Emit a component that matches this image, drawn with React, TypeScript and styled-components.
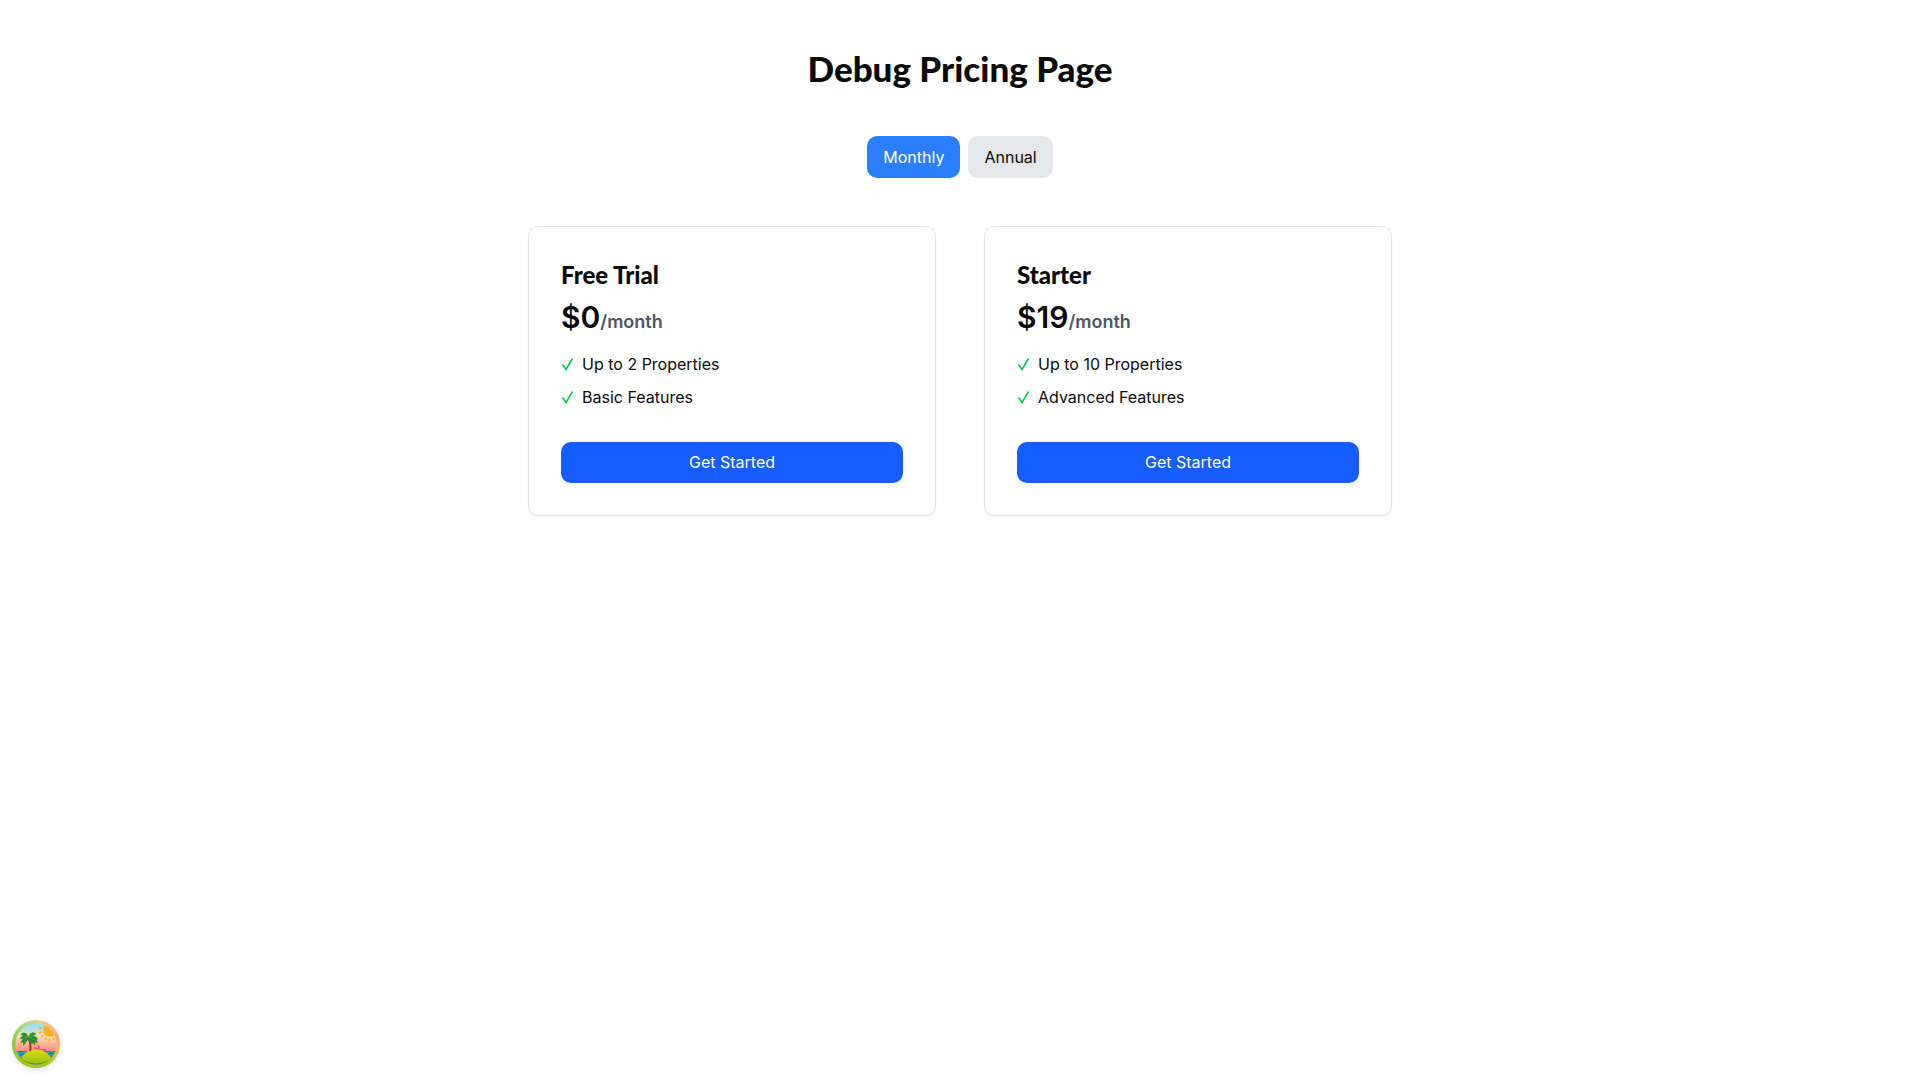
import React, { useState } from "react";
import styled, { createGlobalStyle } from "styled-components";

const GlobalStyle = createGlobalStyle`
  *, *::before, *::after { box-sizing: border-box; }
  body {
    margin: 0;
    background: #ffffff;
    color: #0a0a0a;
    font-family: Inter, "Open Sans", sans-serif;
    font-size: 16px;
    line-height: 26px;
    -webkit-font-smoothing: antialiased;
  }
  button { font: inherit; color: inherit; border: 0; cursor: pointer; }
`;

const Page = styled.main`
  padding: 48px 16px;
  max-width: 896px;
  margin: 0 auto;
`;

const Title = styled.h1`
  margin: 0 0 48px;
  text-align: center;
  font-family: Lato, sans-serif;
  font-size: 35px;
  line-height: 40px;
  font-weight: 900;
`;

const Toggle = styled.div`
  display: flex;
  justify-content: center;
  gap: 8px;
  margin-bottom: 48px;
`;

const ToggleButton = styled.button<{ $active: boolean }>`
  padding: 8px 16px;
  border-radius: 10px;
  background: ${(p) => (p.$active ? "#2b7fff" : "#e5e7eb")};
  && { color: ${(p) => (p.$active ? "#ffffff" : "#0a0a0a")}; }
`;

const Plans = styled.div`
  display: grid;
  grid-template-columns: repeat(auto-fit, minmax(280px, 1fr));
  gap: 48px;
`;

const Card = styled.section`
  padding: 32px;
  border: 1px solid #e5e5e5;
  border-radius: 10px;
  box-shadow: 0 1px 2px rgba(0, 0, 0, 0.05);
`;

const PlanName = styled.h2`
  margin: 0 0 8px;
  font-family: Lato, sans-serif;
  font-size: 24px;
  line-height: 32px;
  font-weight: 900;
`;

const Price = styled.p`
  margin: 0 0 16px;
  font-size: 30px;
  line-height: 36px;
  font-weight: 600;
`;

const Period = styled.span`
  font-size: 18px;
  line-height: 18px;
  color: #4a5565;
`;

const Features = styled.ul`
  display: flex;
  flex-direction: column;
  gap: 7px;
  margin: 0 0 32px;
  padding: 0;
  list-style: none;
`;

const Feature = styled.li`
  display: flex;
  align-items: center;
  gap: 8px;
`;

const CheckIcon = styled.svg`
  width: 13px;
  height: 16px;
  fill: none;
  stroke: #00c950;
  stroke-width: 1.5;
`;

const Start = styled.button`
  width: 100%;
  padding: 8px 16px;
  border-radius: 10px;
  background: #155dfc;
  && { color: #ffffff; line-height: 25px; }
`;

const DevtoolsButton = styled.button`
  position: fixed;
  left: 12px;
  bottom: 12px;
  width: 48px;
  height: 48px;
  padding: 0;
  border-radius: 50%;
  background: none;
  box-shadow: 0 2px 6px rgba(0, 0, 0, 0.12);
  svg { display: block; width: 100%; height: 100%; }
`;

const plans = [
  { name: "Free Trial", monthly: 0, annual: 0, features: ["Up to 2 Properties", "Basic Features"] },
  { name: "Starter", monthly: 19, annual: 190, features: ["Up to 10 Properties", "Advanced Features"] },
];

function Island() {
  const rays = [70, 94, 118, 142, 166, 190];
  return (
    <svg viewBox="0 0 48 48" aria-hidden="true">
      <defs>
        <linearGradient id="ring" x1="0" y1="0.65" x2="1" y2="0.35">
          <stop offset="0" stopColor="#8cc43c" />
          <stop offset="0.35" stopColor="#9dd883" />
          <stop offset="0.7" stopColor="#ecd08a" />
          <stop offset="1" stopColor="#f5a877" />
        </linearGradient>
        <linearGradient id="shore" x1="0" y1="0" x2="0" y2="1">
          <stop offset="0.55" stopColor="#9bc41c" stopOpacity="0" />
          <stop offset="0.9" stopColor="#a5c81c" />
        </linearGradient>
        <linearGradient id="sky" x1="0" y1="0" x2="0" y2="1">
          <stop offset="0.08" stopColor="#8be0ee" />
          <stop offset="0.35" stopColor="#f8dcb4" />
          <stop offset="0.65" stopColor="#ff8d78" />
        </linearGradient>
        <linearGradient id="sand" x1="0.5" y1="0" x2="0.5" y2="1">
          <stop offset="0" stopColor="#d9df0b" />
          <stop offset="1" stopColor="#86b916" />
        </linearGradient>
        <clipPath id="porthole"><circle cx="24" cy="24" r="20.5" /></clipPath>
      </defs>
      <circle cx="24" cy="24" r="24" fill="url(#ring)" />
      <circle cx="24" cy="24" r="24" fill="url(#shore)" />
      <g clipPath="url(#porthole)">
        <rect width="48" height="48" fill="url(#sky)" />
        <circle cx="38" cy="10" r="6.8" fill="#ffb01c" />
        {rays.map((a) => (
          <path key={a} d="M46.6 10h2.6" stroke="#ffa51c" strokeWidth="1.3" transform={`rotate(${a} 38 10)`} />
        ))}
        <path d="M0 31h48v14H0z" fill="#0787a5" />
        <path d="M0 32.5q3-2 6 0t6 0 6 0 6 0 6 0 6 0 6 0 6 0M0 35.5q3-2 6 0t6 0 6 0 6 0 6 0 6 0 6 0 6 0" fill="none" stroke="#56b9bd" strokeWidth=".8" />
        <path d="M22 27.500l4 2 8 .5M26 25l1.500 4M27 31l1-2M32 31v-2" fill="none" stroke="#ee4e79" strokeWidth="1.5" />
        <path d="M7.500 43C9 35 15.500 29.500 24 29.500S39.500 35 41 43l-4 4H11z" fill="url(#sand)" />
        <path d="M9.500 40q14.500 8 29 0" fill="none" stroke="#47751c" strokeWidth=".7" />
        <path d="M18 31c1.200-4 .4-8-1.500-13" fill="none" stroke="#82452c" strokeWidth="2" />
        <path d="M16.500 17C15 12 11 11.500 8.500 14.500L11 15 7.500 19l3-.3L8.500 23.500l2.500-1.500.5 4 2-2.700 3-4.300 3.500 5.500.8-1.500 2.200 3 .2-4 2.800 1.500-1.500-4 1.500-.5c-1.500-2.500-3.500-3.500-6-2.800l4-1.700c-2-3.200-6-2.500-7.500 2.500z" fill="#278a32" />
        <path d="M16.500 17q-4-3-6.500 3m6.500-3q-4 1-4 6m4-6q4-.5 7 4m-7-4q3-3.500 5.500-2" fill="none" stroke="#62b52d" strokeWidth=".8" />
      </g>
    </svg>
  );
}

export default function App() {
  const [annual, setAnnual] = useState(false);
  return (
    <>
      <GlobalStyle />
      <Page>
        <Title>Debug Pricing Page</Title>
        <Toggle>
          <ToggleButton type="button" $active={!annual} onClick={() => setAnnual(false)}>Monthly</ToggleButton>
          <ToggleButton type="button" $active={annual} onClick={() => setAnnual(true)}>Annual</ToggleButton>
        </Toggle>
        <Plans>
          {plans.map((plan) => (
            <Card key={plan.name}>
              <PlanName>{plan.name}</PlanName>
              <Price>
                ${annual ? plan.annual : plan.monthly}
                <Period>/{annual ? "year" : "month"}</Period>
              </Price>
              <Features>
                {plan.features.map((feature) => (
                  <Feature key={feature}>
                    <CheckIcon viewBox="0 0 13 16" aria-hidden="true">
                      <path d="M1.5 8.5 5 13.5 11.5 2.5" />
                    </CheckIcon>
                    {feature}
                  </Feature>
                ))}
              </Features>
              <Start type="button">Get Started</Start>
            </Card>
          ))}
        </Plans>
      </Page>
      <DevtoolsButton type="button" aria-label="Open query devtools"><Island /></DevtoolsButton>
    </>
  );
}
